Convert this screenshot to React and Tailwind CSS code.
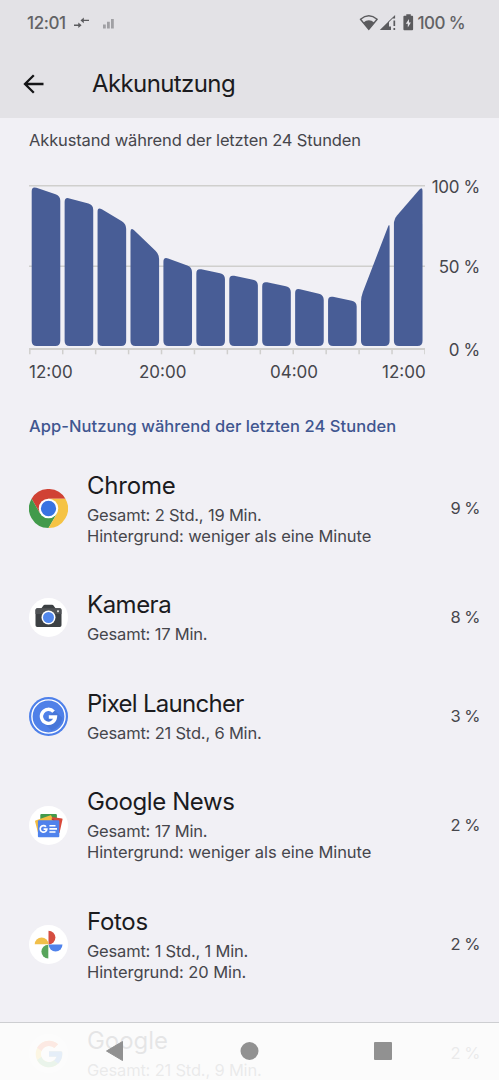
import React from "react";
import { FcGoogle } from "react-icons/fc";

const LEVELS = [185.5, 196.5, 205.5, 225, 256, 268, 274.5, 281, 287.5, 295.5, 302, 217.5, 184];
const PITCH = 32.93;
const BASE = 346;

// Bar outline with softened corners; each corner starts a fixed distance from its vertex.
function barPath(i) {
  const x0 = 2.7 + i * PITCH;
  const x1 = x0 + 28.6;
  const slope = (LEVELS[i + 1] - LEVELS[i]) / PITCH;
  const pts = [
    [x0, LEVELS[i] + (slope < -0.5 && slope > -2 ? 1.5 : slope * 2)],
    [x1, LEVELS[i + 1] - slope * 2],
    [x1, BASE],
    [x0, BASE],
  ];
  const r = 5;
  const toward = (a, b) => {
    const d = Math.hypot(b[0] - a[0], b[1] - a[1]);
    return [a[0] + ((b[0] - a[0]) * r) / d, a[1] + ((b[1] - a[1]) * r) / d];
  };
  let d = "";
  pts.forEach((p, k) => {
    const a = toward(p, pts[(k + 3) % 4]);
    const b = toward(p, pts[(k + 1) % 4]);
    d += `${k ? "L" : "M"}${a[0]} ${a[1]}Q${p[0]} ${p[1]} ${b[0]} ${b[1]}`;
  });
  return d + "Z";
}

function Chart() {
  const ticks = Array.from({ length: 13 }, (_, i) => i);
  return (
    <svg className="block h-[177px] w-[396px]" viewBox="0 178 396 177">
      <g stroke="#d0cfcd" strokeWidth="1.5" fill="none">
        <path d="M0 185.7H396M0 266.2H396" />
        <path d="M0 349H396" strokeWidth="1.9" />
        {ticks.map((i) => (
          <path key={i} d={`M${0.8 + i * PITCH} 349V354.3`} />
        ))}
      </g>
      {ticks.slice(0, 12).map((i) => (
        <path key={i} d={barPath(i)} fill="#485d96" />
      ))}
    </svg>
  );
}

function ChromeIcon() {
  return (
    <svg className="size-[39px]" viewBox="0 0 48 48">
      <path d="M24 12H44.8A24 24 0 0 0 3.2 12L13.6 30Z" fill="#d04234" />
      <path d="M13.6 30L3.2 12A24 24 0 0 0 24 48L34.4 30Z" fill="#429a4b" />
      <path d="M34.4 30L24 48A24 24 0 0 0 44.8 12H24Z" fill="#f5c344" />
      <circle cx="24" cy="24" r="12" fill="#fff" />
      <circle cx="24" cy="24" r="9.4" fill="#3973e2" />
    </svg>
  );
}

function CameraIcon() {
  return (
    <svg className="size-[39px]" viewBox="0 0 39 39">
      <circle cx="19.5" cy="19.5" r="19.5" fill="#fff" />
      <path d="M8.4 10.2H12.4L14.6 7.3Q15 6.8 15.7 6.8H23.2Q23.9 6.8 24.3 7.3L26.5 10.2H30.8Q32.5 10.2 32.5 12V27.2Q32.5 29 30.8 29H8.3Q6.5 29 6.5 27.2V12Q6.5 10.2 8.4 10.2Z" fill="#3c4043" />
      <path d="M6.5 12Q6.5 10.2 8.4 10.2H30.8Q32.5 10.2 32.5 12V16H6.5Z" fill="#505356" />
      <circle cx="19.5" cy="19.5" r="7" fill="#fff" />
      <circle cx="19.5" cy="19.5" r="5.5" fill="#5187ec" />
      <rect x="28" y="12.2" width="2" height="2" rx=".6" fill="#dedede" />
    </svg>
  );
}

function LauncherIcon() {
  return (
    <svg className="size-[39px]" viewBox="0 0 39 39">
      <circle cx="19.5" cy="19.5" r="19.5" fill="#4e80ea" />
      <circle cx="19.5" cy="19.5" r="16.6" fill="#4f80e8" stroke="#fff" strokeWidth="1.4" />
      <path d="M25.5 13.5L33.5 21Q31.5 31 22.5 33.6L14 25.2Z" fill="#4776d8" />
      <path d="M24.6 14.6A7 7 0 1 0 26.4 20H19.8" fill="none" stroke="#fff" strokeWidth="3.4" />
    </svg>
  );
}

function NewsIcon() {
  return (
    <svg className="size-[39px]" viewBox="0 0 39 39">
      <circle cx="19.5" cy="19.5" r="19.5" fill="#fff" />
      <rect x="11.3" y="8" width="16.6" height="12" rx="1" fill="#429a4b" />
      <path d="M23 11L33 12.6Q33.7 12.7 33.5 13.5L30.5 27H20Z" fill="#d9493a" />
      <path d="M6.5 14.4L21.5 9.3Q22.2 9 22.4 9.7L24 14.5V28H10Q9.4 28 9.2 27.4L6 15.3Q5.8 14.7 6.5 14.4Z" fill="#f2bd42" />
      <path d="M22.4 12.7L23.1 14.3H26L23.5 12.6Z" fill="#b73b30" />
      <rect x="8.9" y="14.2" width="21.4" height="17" rx=".9" fill="#4f82ec" />
      <path d="M17 20.7A3.3 3.3 0 1 0 17.8 23.1H14.6" fill="none" stroke="#fff" strokeWidth="1.7" />
      <path d="M20.4 19.8H26.5M20.4 22.9H28M20.4 26H26.5" stroke="#fff" strokeWidth="1.6" />
    </svg>
  );
}

function PhotosIcon() {
  return (
    <svg className="size-[39px]" viewBox="0 0 39 39">
      <circle cx="19.5" cy="19.5" r="19.5" fill="#fff" />
      <path d="M19.5 5.7A6.9 6.9 0 0 1 19.5 19.5Z" fill="#d54d40" />
      <path d="M33.5 19.5A6.9 6.9 0 0 1 19.7 19.5Z" fill="#5083ec" />
      <path d="M19.3 33.5A6.9 6.9 0 0 1 19.3 19.7Z" fill="#58a55c" />
      <path d="M5.7 19.3A6.9 6.9 0 0 1 19.5 19.3Z" fill="#f1bf4a" />
    </svg>
  );
}

function GoogleIcon() {
  return (
    <span className="flex size-[39px] items-center justify-center rounded-full bg-white">
      <FcGoogle className="size-[32px]" />
    </span>
  );
}

const APPS = [
  { name: "Chrome", nameClass: "tracking-[-0.2px]", icon: ChromeIcon, total: "Gesamt: 2 Std., 19 Min.", background: "Hintergrund: weniger als eine Minute", percent: "9 %" },
  { name: "Kamera", nameClass: "tracking-[-0.5px]", icon: CameraIcon, total: "Gesamt: 17 Min.", percent: "8 %" },
  { name: "Pixel Launcher", nameClass: "tracking-[-0.72px]", icon: LauncherIcon, total: "Gesamt: 21 Std., 6 Min.", percent: "3 %" },
  { name: "Google News", nameClass: "tracking-[-0.4px]", icon: NewsIcon, total: "Gesamt: 17 Min.", background: "Hintergrund: weniger als eine Minute", percent: "2 %" },
  { name: "Fotos", nameClass: "tracking-[-0.3px]", icon: PhotosIcon, total: "Gesamt: 1 Std., 1 Min.", background: "Hintergrund: 20 Min.", percent: "2 %" },
  { name: "Google", nameClass: "tracking-[-0.05px]", icon: GoogleIcon, total: "Gesamt: 21 Std., 9 Min.", percent: "2 %" },
];

function AppRow({ app }) {
  const Icon = app.icon;
  return (
    <li className="flex items-center pr-[19px] pl-[29px]">
      <Icon />
      <div className="ml-[19px] flex-1 pt-[17.5px] pb-[22px] text-[16.5px] leading-[21px] text-[#46464c]">
        <h3 className={`text-[24px] leading-[38px] text-[#1b1b1e] ${app.nameClass}`}>{app.name}</h3>
        <p className="tracking-[-0.19px]">{app.total}</p>
        {app.background && <p className="tracking-[-0.07px]">{app.background}</p>}
      </div>
      <span className="text-[16.5px] tracking-[-0.5px] text-[#46464c]">{app.percent}</span>
    </li>
  );
}

function StatusBar() {
  return (
    <div className="flex h-[46px] items-center pr-[34px] pl-[27px] text-[17px] font-medium text-[#626265]">
      <span className="w-[39px] pt-[2px] tracking-[-0.4px]">12:01</span>
      <svg className="ml-[7px] h-[12px] w-[17px]" viewBox="0 0 17 12">
        <path d="M8.5 3.4H16M1 8.2H7" stroke="#5b5b5e" strokeWidth="1.4" />
        <path d="M7.5 3.4L10.8 .6V6.2ZM8.6 8.2L5.3 5.4V11Z" fill="#5b5b5e" />
      </svg>
      <svg className="ml-[13px] h-[11px] w-[12px]" viewBox="0 0 12 11">
        <path d="M0 6.5H2.8V10.5H0ZM4 3.7H6.8V10.5H4ZM8 1H10.8V10.5H8Z" fill="#a0a0a4" />
      </svg>
      <div className="ml-auto flex items-center">
        <svg className="mr-[1px] h-[18px] w-[58px]" viewBox="0 0 58 18">
          <path d="M1.5 5.2Q9.8 -1.8 18.1 5.2L9.8 15.4Z" fill="none" stroke="#5b5b5e" strokeWidth="1.5" strokeLinejoin="round" />
          <path d="M4.4 8.6Q9.8 4 15.2 8.6L9.8 15.4Z" fill="#5b5b5e" />
          <path d="M20.8 16L30 6.9V12.4H32V16Z" fill="#5b5b5e" />
          <path d="M29.6 7.3L36.1 .9V4.6H33.6L29.6 8.6Z" fill="#5b5b5e" />
          <path d="M35.3 6.6V12M35.3 13.9V16" stroke="#5b5b5e" strokeWidth="1.7" />
          <path d="M47.3 .2H51.8V1.8H53.2Q54.1 1.8 54.1 2.7V15.3Q54.1 16.2 53.2 16.2H45.3Q44.4 16.2 44.4 15.3V2.7Q44.4 1.8 45.3 1.8H47.3Z" fill="#5b5b5e" />
          <path d="M50 5L46.8 9.8H48.8V13.4L51.9 8.4H50Z" fill="#e3e2e6" />
        </svg>
        <span className="pt-[2px] whitespace-nowrap tracking-[-0.6px]">100 %</span>
      </div>
    </div>
  );
}

export default function App() {
  return (
    <div className="relative h-[1080px] w-[499px] overflow-hidden bg-[#f1f0f5] font-['Inter',sans-serif]">
      <header className="h-[118px] bg-[#e3e2e6]">
        <StatusBar />
        <div className="flex h-[76px] items-center pl-[21px]">
          <svg className="h-[28px] w-[26px]" viewBox="0 0 26 28">
            <path d="M22.5 14H4.5M12.8 5.2L4 14L12.8 22.8" fill="none" stroke="#151517" strokeWidth="2.3" />
          </svg>
          <h1 className="ml-[45px] text-[24px] tracking-[-0.6px] text-[#1b1b1e]">Akkunutzung</h1>
        </div>
      </header>

      <section>
        <p className="flex h-[45px] items-center pl-[29px] text-[16.5px] tracking-[-0.15px] text-[#46464c]">
          Akkustand während der letzten 24 Stunden
        </p>
        <div className="mt-[15px] flex pl-[29px] text-[17px] tracking-[-0.3px] text-[#46464c]">
          <Chart />
          <div className="-mt-[1px] flex h-[183px] w-[55px] flex-col text-right leading-[20px]">
            <span>100 %</span>
            <span className="mt-[60px]">50 %</span>
            <span className="mt-auto">0 %</span>
          </div>
        </div>
        <div className="flex h-[25px] items-center pl-[29px] text-[17px] text-[#46464c]">
          <span className="w-[110px]">12:00</span>
          <span className="w-[131px]">20:00</span>
          <span className="w-[112px]">04:00</span>
          <span>12:00</span>
        </div>
      </section>

      <section className="pt-[19px]">
        <h2 className="flex h-[45px] items-center pl-[29px] text-[16.5px] font-medium tracking-[0.06px] text-[#405690]">
          App-Nutzung während der letzten 24 Stunden
        </h2>
        <ul>
          {APPS.map((app) => (
            <AppRow key={app.name} app={app} />
          ))}
        </ul>
      </section>

      <nav className="absolute inset-x-0 bottom-0 h-[58px] border-t border-[#cdced1] bg-[#fcfcfc]/90">
        <svg className="h-[57px] w-[499px]" viewBox="0 1023 499 57" fill="#919191">
          <path d="M106.5 1051L122.5 1041.5V1060.5Z" stroke="#919191" strokeLinejoin="round" />
          <circle cx="249.5" cy="1051" r="9" />
          <rect x="374" y="1042" width="18" height="18" rx="1" />
        </svg>
      </nav>
    </div>
  );
}
